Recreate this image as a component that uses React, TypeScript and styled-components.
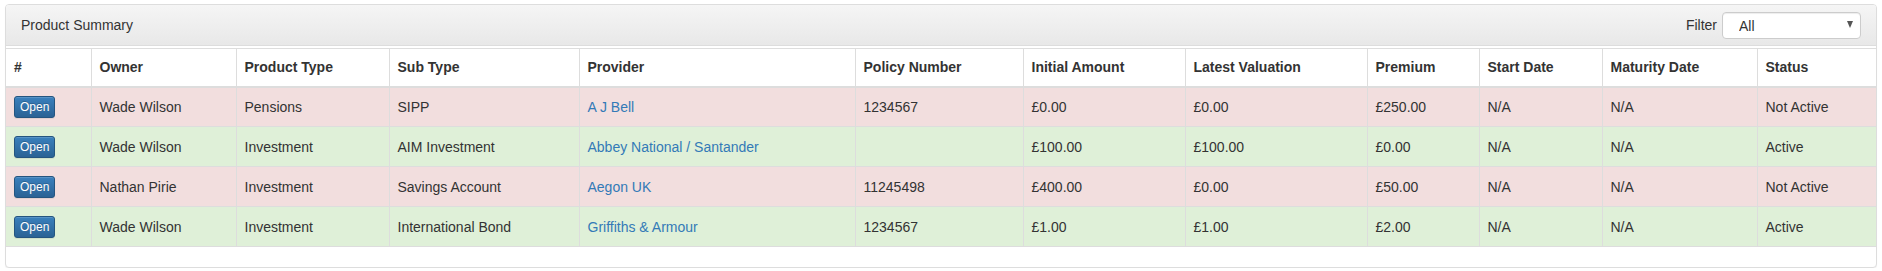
import React from "react";
import styled, { createGlobalStyle } from "styled-components";

const GlobalStyle = createGlobalStyle`
  html, body {
    margin: 0;
    padding: 0;
    background: #fff;
  }
  body {
    font-family: "Liberation Sans", Arial, sans-serif;
    font-size: 14px;
    line-height: 1.42857;
    color: #333;
  }
  * {
    box-sizing: border-box;
  }
`;

const Page = styled.div`
  padding: 4px 5px 0 5px;
`;

const Panel = styled.div`
  border: 1px solid #ddd;
  border-radius: 4px;
  background: #fff;
  box-shadow: 0 1px 1px rgba(0, 0, 0, 0.05);
  overflow: hidden;
`;

const PanelHeading = styled.div`
  display: flex;
  align-items: center;
  justify-content: space-between;
  padding: 7px 15px 6px 15px;
  background-image: linear-gradient(to bottom, #f5f5f5 0, #e8e8e8 100%);
  border-bottom: 1px solid #ddd;
  color: #333;
`;

const Title = styled.span`
  font-size: 14px;
`;

const FilterGroup = styled.label`
  display: flex;
  align-items: center;
  gap: 5px;
`;

const SelectWrap = styled.div`
  position: relative;
  width: 139px;
  height: 27px;
`;

const Select = styled.select`
  appearance: none;
  width: 100%;
  height: 100%;
  border: 1px solid #ccc;
  border-radius: 4px;
  background: #fff;
  padding: 0 20px 0 16px;
  font-family: inherit;
  font-size: 14px;
  color: #333;
  box-shadow: inset 0 1px 1px rgba(0, 0, 0, 0.075);
`;

// little arrow drawn over the select, like the native one
const Caret = styled.span`
  position: absolute;
  right: 8px;
  top: 9px;
  width: 0;
  height: 0;
  border-left: 3.5px solid transparent;
  border-right: 3.5px solid transparent;
  border-top: 7px solid #555;
  pointer-events: none;
`;

const Table = styled.table`
  width: 100%;
  margin-top: 2px;
  border-collapse: collapse;
  table-layout: fixed;
  border: 1px solid #ddd;
  border-left: 0;
  border-right: 0;
`;

const Th = styled.th`
  text-align: left;
  font-weight: bold;
  padding: 8px;
  height: 38px;
  line-height: 20px;
  vertical-align: middle;
  border: 1px solid #ddd;
  border-bottom-width: 2px;
  &:first-child {
    border-left: 0;
  }
  &:last-child {
    border-right: 0;
  }
`;

const Row = styled.tr<{ $tone: "danger" | "success" }>`
  background: ${(p) => (p.$tone === "danger" ? "#f2dede" : "#dff0d8")};
`;

const Td = styled.td`
  padding: 8px;
  line-height: 20px;
  height: 40px;
  vertical-align: middle;
  border: 1px solid #ddd;
  white-space: nowrap;
  &:first-child {
    border-left: 0;
  }
  &:last-child {
    border-right: 0;
  }
`;

const OpenButton = styled.button`
  display: inline-block;
  padding: 1px 5px;
  font-family: inherit;
  font-size: 12px;
  line-height: 1.5;
  color: #fff;
  border: 1px solid #245580;
  border-radius: 3px;
  background-image: linear-gradient(to bottom, #3a80bd 0, #2a6295 100%);
  text-shadow: 0 -1px 0 rgba(0, 0, 0, 0.2);
  box-shadow: inset 0 1px 0 rgba(255, 255, 255, 0.15), 0 1px 1px rgba(0, 0, 0, 0.075);
  vertical-align: middle;
  cursor: pointer;
`;

const ProviderLink = styled.a`
  color: #337ab7;
  text-decoration: none;
`;

const Spacer = styled.div`
  height: 20px;
`;

const widths = [85, 145, 153, 190, 276, 168, 162, 182, 112, 123, 155, 119];

const headers = [
  "#",
  "Owner",
  "Product Type",
  "Sub Type",
  "Provider",
  "Policy Number",
  "Initial Amount",
  "Latest Valuation",
  "Premium",
  "Start Date",
  "Maturity Date",
  "Status",
];

interface Product {
  owner: string;
  type: string;
  subType: string;
  provider: string;
  policy: string;
  initial: string;
  latest: string;
  premium: string;
  start: string;
  maturity: string;
  active: boolean;
}

const products: Product[] = [
  {
    owner: "Wade Wilson",
    type: "Pensions",
    subType: "SIPP",
    provider: "A J Bell",
    policy: "1234567",
    initial: "£0.00",
    latest: "£0.00",
    premium: "£250.00",
    start: "N/A",
    maturity: "N/A",
    active: false,
  },
  {
    owner: "Wade Wilson",
    type: "Investment",
    subType: "AIM Investment",
    provider: "Abbey National / Santander",
    policy: "",
    initial: "£100.00",
    latest: "£100.00",
    premium: "£0.00",
    start: "N/A",
    maturity: "N/A",
    active: true,
  },
  {
    owner: "Nathan Pirie",
    type: "Investment",
    subType: "Savings Account",
    provider: "Aegon UK",
    policy: "11245498",
    initial: "£400.00",
    latest: "£0.00",
    premium: "£50.00",
    start: "N/A",
    maturity: "N/A",
    active: false,
  },
  {
    owner: "Wade Wilson",
    type: "Investment",
    subType: "International Bond",
    provider: "Griffiths & Armour",
    policy: "1234567",
    initial: "£1.00",
    latest: "£1.00",
    premium: "£2.00",
    start: "N/A",
    maturity: "N/A",
    active: true,
  },
];

export default function App() {
  return (
    <Page>
      <GlobalStyle />
      <Panel>
        <PanelHeading>
          <Title>Product Summary</Title>
          <FilterGroup>
            Filter
            <SelectWrap>
              <Select defaultValue="all">
                <option value="all">All</option>
                <option value="active">Active</option>
                <option value="inactive">Not Active</option>
              </Select>
              <Caret />
            </SelectWrap>
          </FilterGroup>
        </PanelHeading>
        <Table>
          <colgroup>
            {widths.map((w, i) => (
              <col key={i} style={{ width: w }} />
            ))}
          </colgroup>
          <thead>
            <tr>
              {headers.map((h) => (
                <Th key={h}>{h}</Th>
              ))}
            </tr>
          </thead>
          <tbody>
            {products.map((p, i) => (
              <Row key={i} $tone={p.active ? "success" : "danger"}>
                <Td>
                  <OpenButton>Open</OpenButton>
                </Td>
                <Td>{p.owner}</Td>
                <Td>{p.type}</Td>
                <Td>{p.subType}</Td>
                <Td>
                  <ProviderLink href="#">{p.provider}</ProviderLink>
                </Td>
                <Td>{p.policy}</Td>
                <Td>{p.initial}</Td>
                <Td>{p.latest}</Td>
                <Td>{p.premium}</Td>
                <Td>{p.start}</Td>
                <Td>{p.maturity}</Td>
                <Td>{p.active ? "Active" : "Not Active"}</Td>
              </Row>
            ))}
          </tbody>
        </Table>
        <Spacer />
      </Panel>
    </Page>
  );
}
